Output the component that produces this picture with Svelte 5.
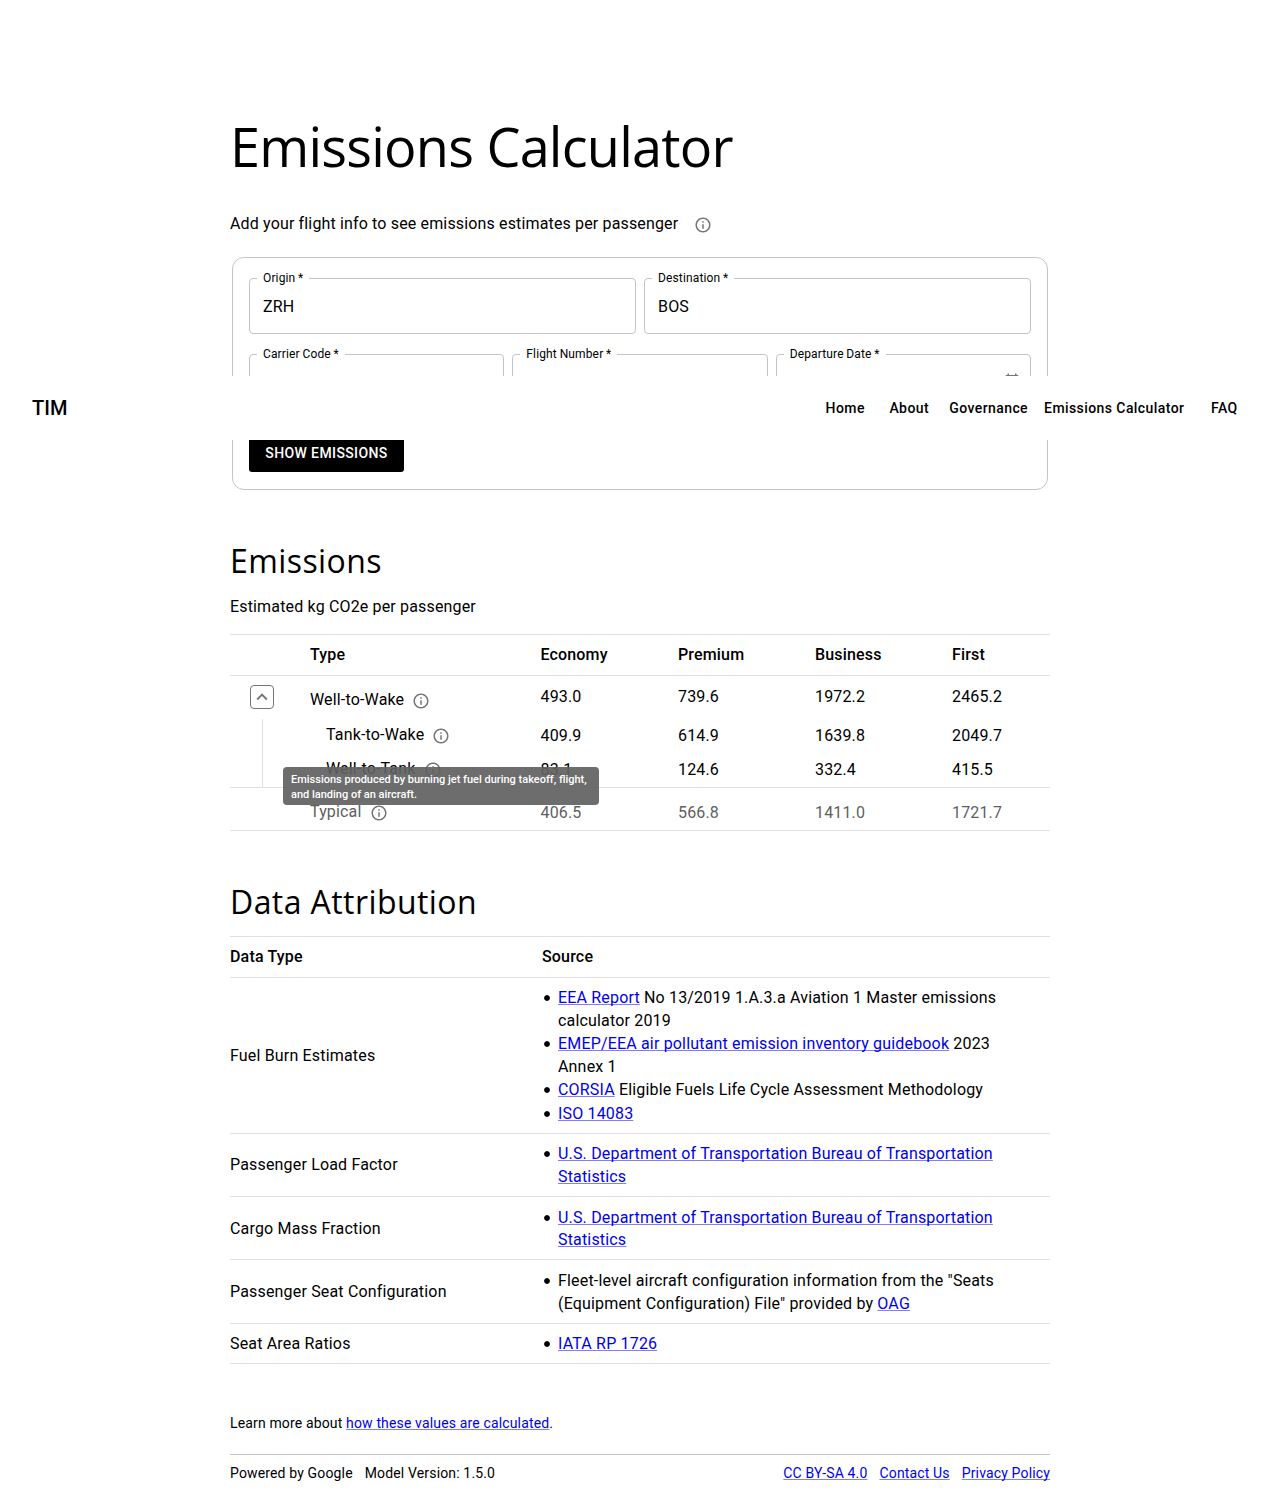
<script>
  const nav = ['Home', 'About', 'Governance', 'Emissions Calculator', 'FAQ'];
  const sources = [
    {
      type: 'Fuel Burn Estimates',
      cls: 'fuel',
      items: [
        { link: 'EEA Report', after: ' No 13/2019 1.A.3.a Aviation 1 Master emissions calculator 2019' },
        { link: 'EMEP/EEA air pollutant emission inventory guidebook', after: ' 2023 Annex 1' },
        { link: 'CORSIA', after: ' Eligible Fuels Life Cycle Assessment Methodology' },
        { link: 'ISO 14083' }
      ]
    },
    { type: 'Passenger Load Factor', cls: 'load', items: [{ link: 'U.S. Department of Transportation Bureau of Transportation Statistics' }] },
    { type: 'Cargo Mass Fraction', cls: 'cargo', items: [{ link: 'U.S. Department of Transportation Bureau of Transportation Statistics' }] },
    {
      type: 'Passenger Seat Configuration',
      cls: 'seats',
      items: [{ before: 'Fleet-level aircraft configuration information from the "Seats (Equipment Configuration) File" provided by ', link: 'OAG' }]
    },
    { type: 'Seat Area Ratios', cls: 'ratios', items: [{ link: 'IATA RP 1726' }] }
  ];
  const rows = [
    { name: 'Well-to-Wake', cls: 'wake', values: ['493.0', '739.6', '1972.2', '2465.2'] },
    { name: 'Tank-to-Wake', cls: 'sub ttw', values: ['409.9', '614.9', '1639.8', '2049.7'] },
    { name: 'Well-to-Tank', cls: 'sub wtt', values: ['83.1', '124.6', '332.4', '415.5'] },
    { name: 'Typical', cls: 'typical', values: ['406.5', '566.8', '1411.0', '1721.7'] }
  ];
</script>

{#snippet info()}
  <svg class="info" viewBox="0 0 24 24" width="18" height="18" aria-hidden="true">
    <path d="M11 7h2v2h-2zm0 4h2v6h-2zm1-9C6.48 2 2 6.48 2 12s4.48 10 10 10 10-4.48 10-10S17.52 2 12 2zm0 18c-4.41 0-8-3.59-8-8s3.59-8 8-8 8 3.59 8 8-3.59 8-8 8z" />
  </svg>
{/snippet}

{#snippet field(label, value, date)}
  <fieldset class="field">
    <legend>{label} *</legend>
    <span>{value}</span>
    {#if date}
      <svg class="cal" viewBox="0 0 24 24" width="18" height="18" aria-hidden="true">
        <path d="M19 4h-1V2h-2v2H8V2H6v2H5c-1.1 0-2 .9-2 2v14c0 1.1.9 2 2 2h14c1.1 0 2-.9 2-2V6c0-1.1-.9-2-2-2zm0 16H5V9h14v11z" />
      </svg>
    {/if}
  </fieldset>
{/snippet}

<header>
  <span class="brand">TIM</span>
  <nav>
    {#each nav as n}<span class="nav-item">{n}</span>{/each}
  </nav>
</header>

<main>
  <h1>Emissions Calculator</h1>
  <p class="intro">Add your flight info to see emissions estimates per passenger {@render info()}</p>

  <section class="form">
    <div class="fields two">
      {@render field('Origin', 'ZRH')}
      {@render field('Destination', 'BOS')}
    </div>
    <div class="fields three">
      {@render field('Carrier Code', 'LX')}
      {@render field('Flight Number', '52')}
      {@render field('Departure Date', '', true)}
    </div>
    <button>SHOW EMISSIONS</button>
  </section>

  <h2>Emissions</h2>
  <p class="unit">Estimated kg CO2e per passenger</p>

  <div class="emissions">
    <div class="row head">
      <span></span><span>Type</span><span>Economy</span><span>Premium</span><span>Business</span><span>First</span>
    </div>
    {#each rows as r, i}
      <div class="row {r.cls}">
        <span class="lead">
          {#if i === 0}
            <span class="toggle">
              <svg viewBox="0 0 24 24" width="22" height="22" aria-hidden="true"><path d="M12 8l-6 6 1.41 1.41L12 10.83l4.59 4.58L18 14z" /></svg>
            </span>
          {/if}
        </span>
        <span class="name">{r.name}{@render info()}</span>
        {#each r.values as v}<span class="num">{v}</span>{/each}
      </div>
    {/each}
    <div class="tooltip">Emissions produced by burning jet fuel during takeoff, flight, and landing of an aircraft.</div>
  </div>

  <h2>Data Attribution</h2>
  <div class="data">
    <div class="drow dhead"><span>Data Type</span><span>Source</span></div>
    {#each sources as s}
      <div class="drow {s.cls}">
        <span class="dtype">{s.type}</span>
        <ul>
          {#each s.items as it}
            <li>{it.before ?? ''}<a href="#top">{it.link}</a>{it.after ?? ''}</li>
          {/each}
        </ul>
      </div>
    {/each}
  </div>

  <p class="learn">Learn more about <a href="#top">how these values are calculated</a>.</p>
  <footer>
    <span>Powered by Google</span><span>Model Version: 1.5.0</span>
    <span class="links"><a href="#top">CC BY-SA 4.0</a><a href="#top">Contact Us</a><a href="#top">Privacy Policy</a></span>
  </footer>
</main>

<style>
  :global(body) { background: #fff; }
  :global(#app) { position: relative; height: 1507px; overflow: hidden; }
  header {
    position: absolute; z-index: 5; top: 376px; left: 0; right: 0; height: 64px;
    box-sizing: border-box; padding: 0 32px; background: #fff;
    display: flex; align-items: center; justify-content: space-between;
    font-family: Roboto, sans-serif; color: #000;
  }
  .brand { font-size: 20px; font-weight: 500; letter-spacing: 0.1px; }
  nav { display: flex; font-size: 14px; font-weight: 500; letter-spacing: 0.42px; margin-right: -8.4px; }
  .nav-item { text-align: center; padding: 0 8px; min-width: 48px; white-space: nowrap; }
  main {
    width: 820px; margin: 0 auto; padding-top: 106px;
    font: 400 16px/23px Roboto, sans-serif; letter-spacing: 0.16px; color: #000;
  }
  h1, h2, p, ul { margin: 0; padding: 0; }
  h1 { font: 400 54px/80px "Open Sans", sans-serif; letter-spacing: -0.77px; }
  h2 { margin-top: 47px; font: 400 32px/48px "Open Sans", sans-serif; letter-spacing: 0.42px; }
  .intro { margin-top: 26px; height: 24px; line-height: 24px; display: flex; align-items: center; gap: 15.5px; letter-spacing: 0.15px; }
  .info { fill: #757575; flex: none; }
  .intro .info { margin-top: 2px; }
  .form {
    margin: 21px 2px 0; box-sizing: border-box; height: 233px; padding: 12px 16px 0;
    border: 1px solid #c4c4c4; border-radius: 12px;
  }
  .fields { display: grid; gap: 8px; margin-bottom: 12px; }
  .two { grid-template-columns: 1fr 1fr; }
  .three { grid-template-columns: 1fr 1fr 1fr; }
  .field {
    min-width: 0; box-sizing: border-box; height: 64px; margin: 0; padding: 0 9px 6px 13px;
    border: 1px solid #c4c4c4; border-radius: 4px; display: flex; align-items: center; justify-content: space-between;
  }
  .field legend { font-size: 12px; line-height: 16px; letter-spacing: 0.14px; word-spacing: -0.4px; padding: 0 6px; margin-left: -6px; }
  .cal { fill: #757575; margin-top: -4px; }
  button {
    display: block; margin: 0; width: 155px; height: 37px; padding: 0 0 1px; border: 0; border-radius: 3px;
    background: #000; color: #fff; font: 500 14px/36px Roboto, sans-serif; letter-spacing: 0.38px;
  }
  .fields.three { margin-bottom: 25px; }
  .unit { margin-top: 10px; }
  .emissions { position: relative; margin-top: 16px; border-top: 1px solid #e0e0e0; }
  .row { display: grid; grid-template-columns: 80px 230.5px 137.5px 137px 137px 98px; box-sizing: border-box; align-items: center; }
  .head { height: 41px; font-weight: 500; border-bottom: 1px solid #e0e0e0; padding-bottom: 1px; }
  .name { display: flex; align-items: center; gap: 8px; }
  .name .info { margin-top: 3px; }
  .lead { align-self: stretch; display: flex; }
  .toggle {
    box-sizing: border-box; width: 24px; height: 24px; margin: 9px 0 0 20px; border: 1px solid #757575; border-radius: 4px;
    display: flex; align-items: center; justify-content: center;
  }
  .toggle svg { fill: #757575; }
  .wake { height: 43px; }
  .wake .name { padding-top: 3px; }
  .wake .num { padding-bottom: 3px; }
  .ttw { height: 34px; }
  .wtt { height: 35px; border-bottom: 1px solid #e0e0e0; }
  .sub .num { padding-bottom: 2px; }
  .sub .lead { margin-left: 32px; border-left: 1px solid #e0e0e0; }
  .sub .name { padding-left: 16px; margin-top: -3px; }
  .typical { height: 43px; border-bottom: 1px solid #e0e0e0; color: #5f5f5f; }
  .typical .name { padding-top: 5px; }
  .typical .num { padding-top: 7px; }
  .tooltip {
    position: absolute; left: 53px; top: 132px; width: 316px; height: 38px; box-sizing: border-box;
    padding: 5px 8px 3px; border-radius: 4px; background: rgba(97, 97, 97, 0.92); color: #fff;
    font-size: 11px; font-weight: 500; line-height: 15px; letter-spacing: 0;
  }
  .data { margin-top: 10px; border-top: 1px solid #e0e0e0; letter-spacing: 0.172px; }
  .drow { display: grid; grid-template-columns: 312px 1fr; align-items: center; border-bottom: 1px solid #e0e0e0; padding: 8px 0; }
  .drow.dhead { font-weight: 500; height: 24px; padding: 7px 0 9px; }
  .fuel li:last-child { margin-top: 1px; }
  .load .dtype { margin-top: -2px; }
  .cargo { padding: 10px 0 8px; line-height: 22px; }
  .seats { padding-top: 9px; }
  .seats .dtype { margin-top: -1px; }
  ul { padding: 0 48px 0 16px; list-style: none; }
  li { position: relative; }
  li::before {
    content: ''; position: absolute; left: -15px; top: 8px; width: 8px; height: 8px;
    background: radial-gradient(circle at center, #000 2.4px, transparent 3.3px);
  }
  .cargo li::before { top: 7px; }
  a {
    color: #0000ee; text-decoration: underline; text-decoration-thickness: 1px; text-underline-offset: 1px;
    text-decoration-color: rgba(0, 0, 238, 0.5); text-decoration-skip-ink: none;
  }
  .learn { margin-top: 48px; font-size: 14px; letter-spacing: 0.15px; }
  footer {
    display: flex; gap: 12px; margin-top: 19px; padding-top: 7px; border-top: 1px solid #c4c4c4; font-size: 14px; letter-spacing: 0.15px;
  }
  .links { margin-left: auto; display: flex; gap: 12px; }
</style>
